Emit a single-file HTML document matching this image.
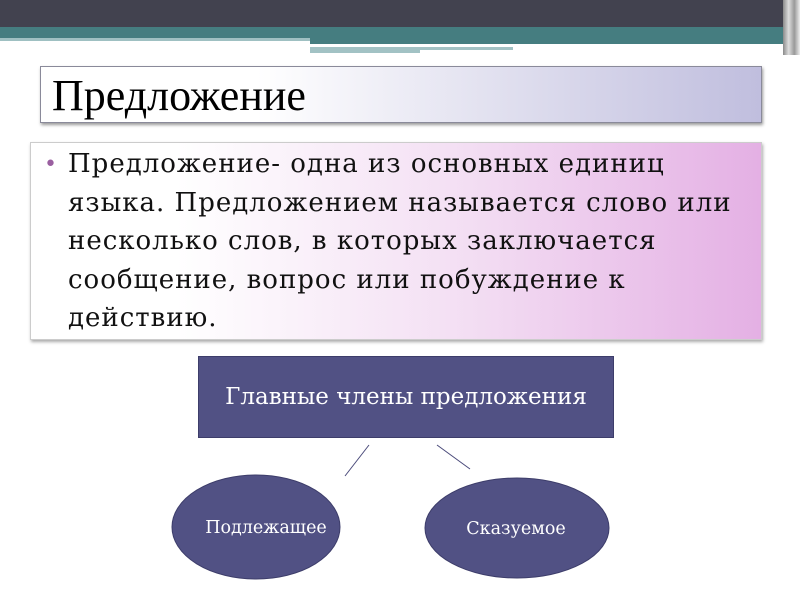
<!DOCTYPE html>
<html><head><meta charset="utf-8"><style>
body{margin:0;width:800px;height:600px;background:#fff;position:relative;overflow:hidden;font-family:"DejaVu Serif","Liberation Serif",serif}
div{position:absolute}
</style></head><body>
<div style="left:0;top:0;width:800px;height:27px;background:#42424f"></div>
<div style="left:0;top:27px;width:800px;height:11px;background:#457d80"></div>
<div style="left:0;top:38px;width:310px;height:3px;background:#9fc0c2"></div>
<div style="left:310px;top:38px;width:490px;height:6px;background:#457d80"></div>
<div style="left:310px;top:44px;width:175px;height:3px;background:#fff"></div>
<div style="left:310px;top:47px;width:110px;height:6px;background:#a2c2c4"></div>
<div style="left:420px;top:47px;width:93px;height:3px;background:#a2c2c4"></div>
<div style="left:783px;top:0;width:17px;height:55px;background:linear-gradient(90deg,#8a8a8a,#ddd,#999,#eee)"></div>

<div style="left:40px;top:66px;width:720px;height:55px;border:1px solid #8a8a9a;background:linear-gradient(90deg,#fff 30%,#c0bede);box-shadow:1px 2px 3px #999"></div>
<div style="left:52px;top:69px;font-family:'Liberation Serif',serif;font-size:44px;line-height:54px;color:#000">Предложение</div>

<div style="left:30px;top:142px;width:730px;height:196px;border:1px solid #ccc;background:linear-gradient(90deg,#fff 20%,#f3def3 60%,#e4b0e4);box-shadow:1px 2px 3px #aaa"></div>
<div style="left:44px;top:146px;font-size:22px;line-height:38px;color:#9a5fa0">•</div>
<div style="left:68px;top:145px;width:720px;font-size:26px;line-height:38.5px;color:#111;white-space:nowrap;letter-spacing:1px">Предложение- одна из основных единиц<br>языка. Предложением называется слово или<br>несколько слов, в которых заключается<br>сообщение, вопрос или побуждение к<br>действию.</div>

<div style="left:198px;top:356px;width:416px;height:82px;background:#515184;border:1px solid #3d3d6a;box-sizing:border-box;color:#fff;font-size:23px;line-height:80px;text-align:center;white-space:nowrap">Главные члены предложения</div>

<svg style="position:absolute;left:0;top:0" width="800" height="600">
<line x1="369" y1="445" x2="345" y2="476" stroke="#4a4a7a" stroke-width="1"/>
<line x1="437" y1="445" x2="470" y2="469" stroke="#4a4a7a" stroke-width="1"/>
<ellipse cx="256" cy="527" rx="84" ry="52" fill="#515184" stroke="#3d3d6a"/>
<ellipse cx="517" cy="528" rx="92" ry="50" fill="#515184" stroke="#3d3d6a"/>
<text x="266" y="533" fill="#fff" font-size="17.5" text-anchor="middle" font-family="DejaVu Serif, serif">Подлежащее</text>
<text x="516" y="534" fill="#fff" font-size="17.5" text-anchor="middle" font-family="DejaVu Serif, serif">Сказуемое</text>
</svg>
</body></html>
